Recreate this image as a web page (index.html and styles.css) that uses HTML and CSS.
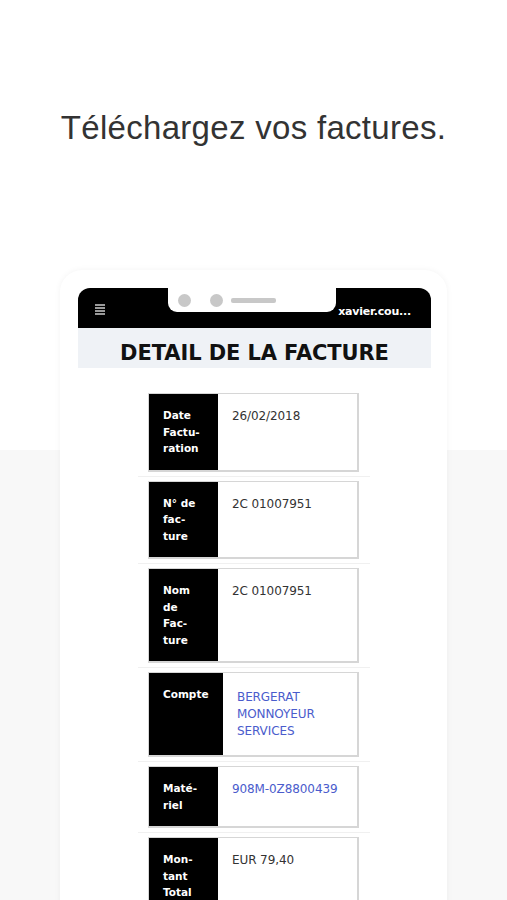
FILE: index.html
```html
<!DOCTYPE html>
<html lang="fr">
<head>
<meta charset="utf-8">
<link rel="stylesheet" href="styles.css">
</head>
<body>
<h1 class="hero">Téléchargez vos factures.</h1>
<div class="phone">
  <div class="notch">
    <span class="dot"></span><span class="dot"></span><span class="bar"></span>
  </div>
  <div class="screen">
    <div class="topbar">
      <svg class="burger" width="10" height="11" viewBox="0 0 10 11"><rect x="0" y="0" width="10" height="2" fill="#9a9a9a"/><rect x="0" y="3" width="10" height="2" fill="#9a9a9a"/><rect x="0" y="6" width="10" height="2" fill="#9a9a9a"/><rect x="0" y="9" width="10" height="2" fill="#9a9a9a"/></svg>
      <span class="user">xavier.cou...</span>
    </div>
    <div class="band">DETAIL DE LA FACTURE</div>
    <div class="rows">
      <div class="row"><div class="card"><div class="lab">Date<br>Factu-<br>ration</div><div class="val">26/02/2018</div></div></div>
      <div class="row"><div class="card"><div class="lab">N° de<br>fac-<br>ture</div><div class="val">2C 01007951</div></div></div>
      <div class="row"><div class="card"><div class="lab">Nom<br>de<br>Fac-<br>ture</div><div class="val">2C 01007951</div></div></div>
      <div class="row"><div class="card"><div class="lab wide">Compte</div><div class="val link tall">BERGERAT<br>MONNOYEUR<br>SERVICES</div></div></div>
      <div class="row"><div class="card"><div class="lab">Maté-<br>riel</div><div class="val link">908M-0Z8800439</div></div></div>
      <div class="row"><div class="card"><div class="lab">Mon-<br>tant<br>Total</div><div class="val">EUR 79,40</div></div></div>
    </div>
  </div>
</div>
</body>
</html>
```
FILE: styles.css
```css
html, body {
  margin: 0;
  padding: 0;
}
body {
  width: 507px;
  height: 900px;
  overflow: hidden;
  background: linear-gradient(#ffffff 0, #ffffff 450px, #f8f8f8 450px);
}
.hero {
  margin: 0;
  padding-top: 107px;
  height: 164px;
  box-sizing: border-box;
  text-align: center;
  font-family: "Liberation Sans", Arial, sans-serif;
  font-weight: normal;
  font-size: 33px;
  line-height: 42px;
  color: #333333;
  letter-spacing: 0.3px;
}
.phone {
  position: relative;
  margin: 106px 0 0 60px;
  width: 387px;
  height: 700px;
  box-sizing: border-box;
  padding: 18px 16px 0 18px;
  background: #ffffff;
  border-radius: 22px;
  box-shadow: 0 0 6px rgba(0, 0, 0, 0.05);
}
.notch {
  position: absolute;
  left: 108px;
  top: 18px;
  width: 168px;
  height: 24px;
  background: #ffffff;
  border-radius: 0 0 9px 9px;
  display: flex;
  align-items: center;
  padding-left: 10px;
  box-sizing: border-box;
}
.dot {
  width: 13px;
  height: 13px;
  border-radius: 50%;
  background: #c8c8c8;
  margin-right: 19px;
}
.dot + .dot {
  margin-right: 8px;
}
.bar {
  width: 45px;
  height: 5px;
  border-radius: 2px;
  background: #c8c8c8;
}
.screen {
  width: 353px;
  font-family: "DejaVu Sans", sans-serif;
}
.topbar {
  height: 40px;
  background: #000;
  border-radius: 12px 12px 0 0;
  display: flex;
  align-items: center;
  justify-content: space-between;
  padding: 0 20px 0 17px;
  box-sizing: border-box;
}
.burger {
  display: block;
  margin-top: 2px;
}
.user {
  color: #fff;
  font-weight: bold;
  font-size: 11px;
  letter-spacing: -0.2px;
  margin-top: 7px;
}
.band {
  height: 40px;
  background: #eff2f6;
  text-align: center;
  font-weight: bold;
  font-size: 21px;
  line-height: 50px;
  color: #111;
  letter-spacing: -0.1px;
}
.rows {
  margin-top: 21px;
  padding-left: 60px;
}
.row {
  width: 232px;
  padding: 4px 11px 4px 10px;
  box-sizing: border-box;
  border-bottom: 1px solid #f0f0f0;
}
.card {
  display: flex;
  width: 211px;
  border: 1px solid #d6d6d6;
  border-width: 1px 2px 2px 1px;
  box-sizing: border-box;
  background: #fff;
}
.lab {
  width: 69px;
  flex: none;
  background: #000;
  color: #fff;
  font-weight: bold;
  font-size: 10.5px;
  line-height: 16.5px;
  padding: 13px 0 13px 14px;
  box-sizing: border-box;
}
.lab.wide {
  width: 74px;
}
.val {
  color: #333;
  font-size: 12px;
  line-height: 16px;
  padding: 14px 6px 10px 14px;
  letter-spacing: -0.1px;
}
.val.link {
  color: #4a5ccc;
}
.val.tall {
  line-height: 17px;
  padding-top: 16px;
  padding-bottom: 15px;
}
```
